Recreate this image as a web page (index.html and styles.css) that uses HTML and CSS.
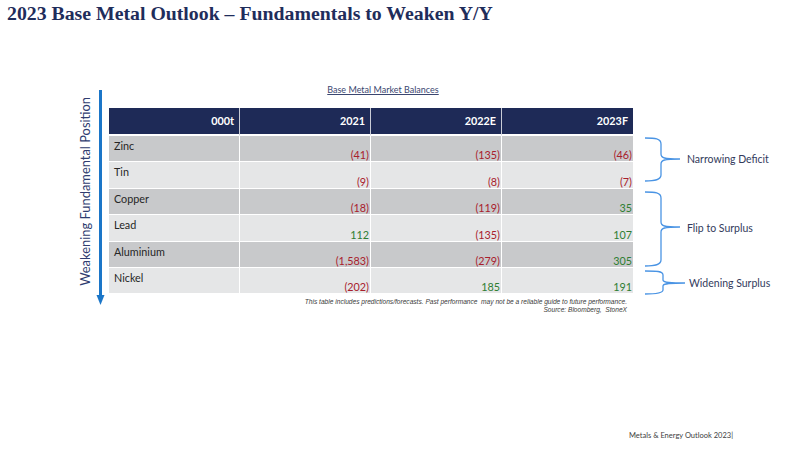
FILE: index.html
```html
<!DOCTYPE html>
<html>
<head>
<meta charset="utf-8">
<link rel="stylesheet" href="styles.css">
</head>
<body>
<main class="slide">
  <h1 class="title">2023 Base Metal Outlook – Fundamentals to Weaken Y/Y</h1>
  <section class="chart">
    <div class="axis">
      <span class="axis-label">Weakening Fundamental Position</span>
      <svg class="arrow" width="10" height="215" viewBox="0 0 10 215">
        <line x1="4.5" y1="0" x2="4.5" y2="207" stroke="#1b76c8" stroke-width="3"/>
        <polygon points="0.5,205 8.5,205 4.5,215" fill="#1b76c8"/>
      </svg>
    </div>
    <div class="tablewrap">
      <div class="caption"><u>Base Metal Market Balances</u></div>
      <table class="balances">
        <thead>
          <tr><th>000t</th><th>2021</th><th>2022E</th><th>2023F</th></tr>
        </thead>
        <tbody>
          <tr class="dark"><td class="metal">Zinc</td><td class="neg">(41)</td><td class="neg">(135)</td><td class="neg">(46)</td></tr>
          <tr class="light"><td class="metal">Tin</td><td class="neg">(9)</td><td class="neg">(8)</td><td class="neg">(7)</td></tr>
          <tr class="dark"><td class="metal">Copper</td><td class="neg">(18)</td><td class="neg">(119)</td><td class="pos">35</td></tr>
          <tr class="light"><td class="metal">Lead</td><td class="pos">112</td><td class="neg">(135)</td><td class="pos">107</td></tr>
          <tr class="dark"><td class="metal">Aluminium</td><td class="neg">(1,583)</td><td class="neg">(279)</td><td class="pos">305</td></tr>
          <tr class="light"><td class="metal">Nickel</td><td class="neg">(202)</td><td class="pos">185</td><td class="pos">191</td></tr>
        </tbody>
      </table>
      <p class="note">This table includes predictions/forecasts. Past performance&nbsp; may not be a reliable guide to future performance.<br>Source: Bloomberg,&nbsp; StoneX</p>
    </div>
    <div class="braces">
      <div class="group g1">
        <svg width="45" height="52" viewBox="0 0 45 52">
          <path d="M5,2 C15,2 21,2.5 21,8 V18 C21,22 24,23 40,23 M40,23 C24,23 21,24 21,28 V39 C21,44 15,45 5,45" fill="none" stroke="#4a94e4" stroke-width="1.3"/>
        </svg>
        <span class="brace-label">Narrowing Deficit</span>
      </div>
      <div class="group g2">
        <svg width="45" height="80" viewBox="0 0 45 80">
          <path d="M5,4 C15,4 21,4.5 21,10 V34 C21,38 24,39 40,39 M40,39 C24,39 21,40 21,44 V72 C21,77 15,78 5,78" fill="none" stroke="#4a94e4" stroke-width="1.3"/>
        </svg>
        <span class="brace-label">Flip to Surplus</span>
      </div>
      <div class="group g3">
        <svg width="46" height="28" viewBox="0 0 46 28">
          <path d="M5,3 C16,3 23,3 23,7 V12 C23,14 26,15 45,15 M45,15 C26,15 23,16 23,18 V22 C23,25 16,26 5,26" fill="none" stroke="#4a94e4" stroke-width="1.3"/>
        </svg>
        <span class="brace-label">Widening Surplus</span>
      </div>
    </div>
  </section>
  <footer class="footer">Metals &amp; Energy Outlook 2023|</footer>
</main>
</body>
</html>
```
FILE: styles.css
```css
* { box-sizing: border-box; }
html, body { margin: 0; padding: 0; background: #fff; }
.slide {
  width: 800px;
  height: 450px;
  display: flex;
  flex-direction: column;
  font-family: Lato, "Open Sans", sans-serif;
  overflow: hidden;
}
.title {
  margin: 0;
  padding: 1px 0 0 7px;
  font-family: "Liberation Serif", serif;
  font-weight: bold;
  font-size: 19.8px;
  line-height: 24px;
  color: #1f2d5b;
  height: 27px;
}
.chart {
  display: flex;
  align-items: flex-start;
  margin-top: 57px;
}
.axis {
  display: flex;
  align-items: center;
  margin-left: 78px;
  margin-top: 6px;
}
.axis-label {
  writing-mode: vertical-rl;
  transform: rotate(180deg);
  font-size: 12.9px;
  line-height: 14px;
  width: 14px;
  color: #2f3d70;
  white-space: nowrap;
  margin-right: 4px;
  margin-bottom: 12px;
}
.arrow { display: block; }
.tablewrap {
  width: 524px;
  margin-left: 3px;
}
.caption {
  height: 24px;
  line-height: 12px;
  font-size: 9px;
  color: #3a4670;
  text-align: center;
  padding-left: 24px;
}
.caption u { text-underline-offset: 1px; }
.balances {
  width: 524px;
  border-collapse: separate;
  border-spacing: 0;
  table-layout: fixed;
  font-size: 10.8px;
}
.balances th {
  background: #1e2a57;
  color: #fff;
  font-weight: bold;
  text-align: right;
  height: 28px;
  padding: 0 5px 2px 0;
  border-bottom: 2px solid #fff;
  border-right: 1px solid #c9ccd6;
}
.balances th:last-child, .balances td:last-child { border-right: none; }
.balances td {
  height: 26.4px;
  border-bottom: 1px solid #fff;
  border-right: 1px solid #fff;
  text-align: right;
  vertical-align: bottom;
  padding: 0 1px 0 0;
  line-height: 13px;
}
.balances tr:last-child td { border-bottom: none; height: 25.4px; }
.balances td.metal {
  text-align: left;
  vertical-align: top;
  padding: 3px 0 0 5px;
  color: #262626;
}
.dark td { background: #c8c9cb; }
.light td { background: #e5e6e7; }
.neg { color: #a8202c; }
.pos { color: #2e7d32; }
.note {
  margin: 5px 0 0;
  padding-right: 6px;
  text-align: right;
  font-family: "Liberation Sans", Arial, sans-serif;
  font-style: italic;
  font-size: 6.6px;
  line-height: 7.5px;
  color: #3a3a3a;
}
.braces {
  display: flex;
  flex-direction: column;
  margin-left: 7px;
  margin-top: 52px;
}
.group {
  display: flex;
  align-items: center;
}
.group svg { display: block; flex: none; }
.g1 { height: 52px; }
.g2 { height: 80px; }
.g3 { height: 28px; }
.brace-label {
  font-size: 10.5px;
  color: #333b5c;
  margin-left: 2px;
  white-space: nowrap;
}
.g1 .brace-label { margin-top: -6px; }
.g3 .brace-label { margin-left: 3px; margin-top: 2px; }
.footer {
  margin-top: auto;
  padding: 0 0 9px 629px;
  font-size: 7.5px;
  line-height: 10px;
  color: #404040;
}
```
